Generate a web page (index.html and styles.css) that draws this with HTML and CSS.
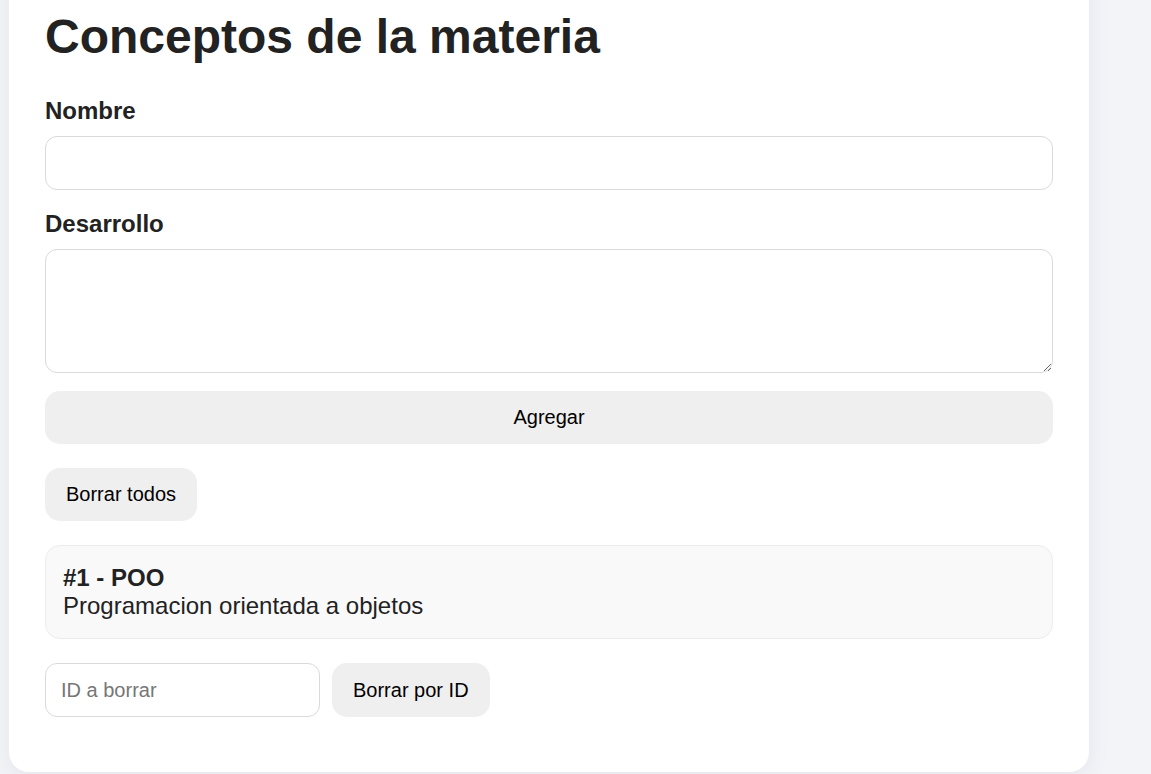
FILE: index.html
```html
<!DOCTYPE html>
<html lang="es">
<head>
<meta charset="utf-8">
<title>Conceptos de la materia</title>
<link rel="stylesheet" href="styles.css">
</head>
<body>
  <main class="card">
    <h1 class="title">Conceptos de la materia</h1>
    <form class="concept-form">
      <label class="label" for="nombre">Nombre</label>
      <input class="field" id="nombre" type="text">
      <label class="label" for="desarrollo">Desarrollo</label>
      <textarea class="field field-area" id="desarrollo"></textarea>
      <button class="btn btn-block" type="button">Agregar</button>
    </form>
    <button class="btn btn-clear" type="button">Borrar todos</button>
    <ul class="list">
      <li class="item">
        <strong class="item-title">#1 - POO</strong>
        <span class="item-text">Programacion orientada a objetos</span>
      </li>
    </ul>
    <div class="delete-row">
      <input class="field field-id" type="text" placeholder="ID a borrar">
      <button class="btn" type="button">Borrar por ID</button>
    </div>
  </main>
</body>
</html>
```

FILE: styles.css
```css
html, body {
  margin: 0;
  height: 100%;
}

body {
  box-sizing: border-box;
  height: 774px;
  overflow: hidden;
  display: flex;
  flex-direction: column;
  justify-content: flex-end;
  align-items: flex-start;
  padding: 0 0 2px 9px;
  background: #f3f4f8;
  font-family: "Liberation Sans", Arial, sans-serif;
  color: #222;
}

.card {
  flex-shrink: 0;
  box-sizing: border-box;
  width: 1080px;
  padding: 36px 36px 37px;
  background: #fff;
  border-radius: 20px;
  box-shadow: 0 6px 24px rgba(20, 20, 50, 0.06);
}

.title {
  margin: 32px 0 31px;
  font-size: 48px;
  font-weight: 700;
  line-height: normal;
  color: #222;
}

.concept-form {
  margin: 0;
}

.label {
  display: block;
  padding-top: 2px;
  margin-bottom: 11px;
  font-size: 24px;
  font-weight: 700;
  line-height: normal;
  color: #222;
}

.field {
  display: block;
  box-sizing: border-box;
  width: 100%;
  height: 54px;
  margin: 0 0 18px;
  padding: 0 15px;
  border: 1px solid #dadada;
  border-radius: 12px;
  background: #fff;
  font-family: "Liberation Sans", Arial, sans-serif;
  font-size: 20px;
  color: #222;
  outline: none;
}

.field::placeholder {
  color: #767676;
}

.field-area {
  height: 124px;
  padding: 15px;
  resize: vertical;
}

.btn {
  box-sizing: border-box;
  padding: 15px 21px;
  border: none;
  border-radius: 15px;
  background: #efefef;
  font-family: "Liberation Sans", Arial, sans-serif;
  font-size: 20px;
  line-height: 23px;
  color: #000;
  cursor: pointer;
}

.btn-block {
  display: block;
  width: 100%;
  margin-bottom: 24px;
}

.btn-clear {
  display: block;
  margin-bottom: 24px;
}

.list {
  list-style: none;
  margin: 0 0 24px;
  padding: 0;
}

.item {
  display: flex;
  flex-direction: column;
  padding: 18px 17px;
  border: 1px solid #ececec;
  border-radius: 15px;
  background: #f9f9f9;
  font-size: 24px;
  line-height: normal;
  color: #222;
}

.item-title {
  font-weight: 700;
}

.delete-row {
  display: flex;
  align-items: stretch;
  gap: 12px;
  margin-bottom: 18px;
}

.field-id {
  width: 275px;
  margin: 0;
}
```
